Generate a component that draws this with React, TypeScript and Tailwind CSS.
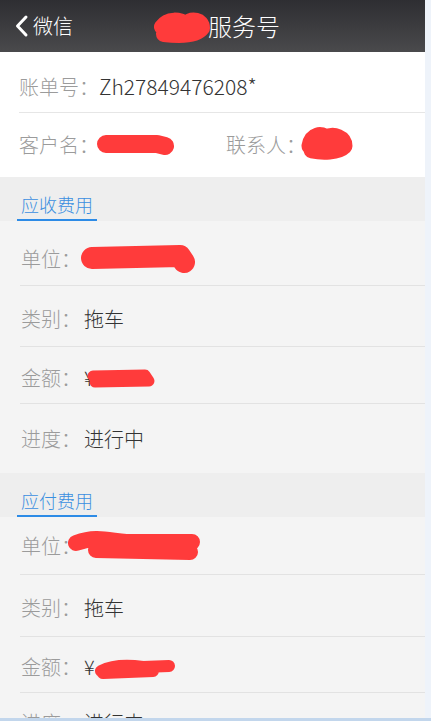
import { ReactNode } from "react";

const font = { fontFamily: '"Noto Sans CJK SC", "Noto Sans", sans-serif' };

function Blob({ w, h, d, sw, className = "" }: { w: number; h: number; d: string; sw: number; className?: string }) {
  return (
    <svg width={w} height={h} viewBox={`0 0 ${w} ${h}`} className={`shrink-0 ${className}`}>
      <path d={d} fill="none" stroke="#ff3b3b" strokeWidth={sw} strokeLinecap="round" strokeLinejoin="round" />
    </svg>
  );
}

function Row({ label, children, h, pt = 0, divider = true }: { label: string; children?: ReactNode; h: string; pt?: number; divider?: boolean }) {
  return (
    <div className={`relative shrink-0 ${h} flex items-center pl-[21px]`} style={pt ? { paddingTop: pt } : undefined}>
      <span className="text-[20px] font-light text-[#9b9b9b]">{label}</span>
      <div className="relative flex items-center ml-[3px] text-[20px] font-light text-[#333]">{children}</div>
      {divider && <div className="absolute bottom-0 left-[20px] right-0 h-px bg-[#e2e2e2]" />}
    </div>
  );
}

function Band({ title }: { title: string }) {
  return (
    <div className="h-[44px] shrink-0 bg-[#eeeeee] flex items-end pl-[17px]">
      <div className="w-[80px] whitespace-nowrap border-b-2 border-[#2d8be6] pb-[1px] pl-[4px] text-[18px] font-light leading-[28px] text-[#3b8fe0]">{title}</div>
    </div>
  );
}

export default function App() {
  return (
    <div className="w-[431px] h-[721px] overflow-hidden flex flex-col" style={font}>
      <div className="flex flex-1 min-h-0">
        <div className="w-[425px] flex flex-col bg-[#f4f4f4] overflow-hidden">
          {/* Header */}
          <div className="relative h-[52px] shrink-0 bg-gradient-to-b from-[#2e2e32] to-[#4a4a4c] flex items-center">
            <div className="flex items-center pl-[14px] text-white">
              <svg width="16" height="24" viewBox="0 0 16 24">
                <path d="M12 3 L3.5 12 L12 21" fill="none" stroke="#fff" strokeWidth="3" strokeLinecap="round" strokeLinejoin="round" />
              </svg>
              <span className="ml-[3px] text-[20px] font-light leading-none">微信</span>
            </div>
            <div className="absolute left-[150px] top-0 h-full flex items-center">
              <Blob w={62} h={34} sw={16} d="M12 17 C 18 8, 30 10, 36 14 C 42 8, 52 10, 52 18 C 46 26, 30 26, 14 24" className="mt-[2px]" />
              <span className="text-[24px] font-light leading-none text-white -ml-[4px]">服务号</span>
            </div>
          </div>

          {/* Bill info */}
          <div className="bg-white shrink-0">
            <div className="relative h-[61px] flex items-center pl-[19px] pt-[8px]">
              <span className="text-[20px] font-light text-[#9b9b9b]">账单号：</span>
              <span className="text-[21px] font-light text-[#333]">Zh27849476208*</span>
              <div className="absolute bottom-0 left-[19px] right-0 h-px bg-[#e6e6e6]" />
            </div>
            <div className="h-[64px] flex items-center pl-[19px]">
              <span className="text-[20px] font-light text-[#9b9b9b]">客户名：</span>
              <Blob w={80} h={26} sw={18} d="M11 12 L62 12 L70 14" className="-ml-[4px]" />
              <span className="ml-[51px] text-[20px] font-light text-[#9b9b9b]">联系人：</span>
              <Blob w={60} h={36} sw={17} d="M12 22 C 14 10, 24 10, 28 14 C 36 10, 46 14, 46 22 C 40 28, 24 28, 14 26" className="-ml-[8px] -mt-[6px]" />
            </div>
          </div>

          {/* Receivable */}
          <Band title="应收费用" />
          <Row label="单位：" h="h-[65px]" pt={10}>
            <Blob w={116} h={30} sw={22} d="M12 14 L100 12 L104 18" className="-ml-[4px]" />
          </Row>
          <Row label="类别：" h="h-[61px]" pt={5}>拖车</Row>
          <Row label="金额：" h="h-[57px]" pt={5}>
            <span>¥</span>
            <Blob w={74} h={22} sw={11} d="M8 8 L60 7 L64 13 L10 14" className="-ml-[10px] mt-[2px]" />
          </Row>
          <Row label="进度：" h="h-[69px]" divider={false}>进行中</Row>

          {/* Payable */}
          <Band title="应付费用" />
          <Row label="单位：" h="h-[58px]">
            <Blob w={140} h={32} sw={16} d="M10 13 C 30 6, 40 10, 60 12 L126 12 M30 20 L124 22" className="-ml-[18px]" />
          </Row>
          <Row label="类别：" h="h-[62px]" pt={4}>拖车</Row>
          <Row label="金额：" h="h-[56px]" pt={4}>
            <span>¥</span>
            <Blob w={84} h={24} sw={12} d="M8 14 C 20 8, 36 8, 50 10 L76 9 M10 16 L60 14" className="-ml-[2px] mt-[4px]" />
          </Row>
          <Row label="进度：" h="h-[60px]" divider={false}>进行中</Row>
        </div>
        <div className="flex-1 bg-[#eef3fa]" />
      </div>
      <div className="h-[3px] shrink-0 bg-[#c2d6ec]" />
    </div>
  );
}
